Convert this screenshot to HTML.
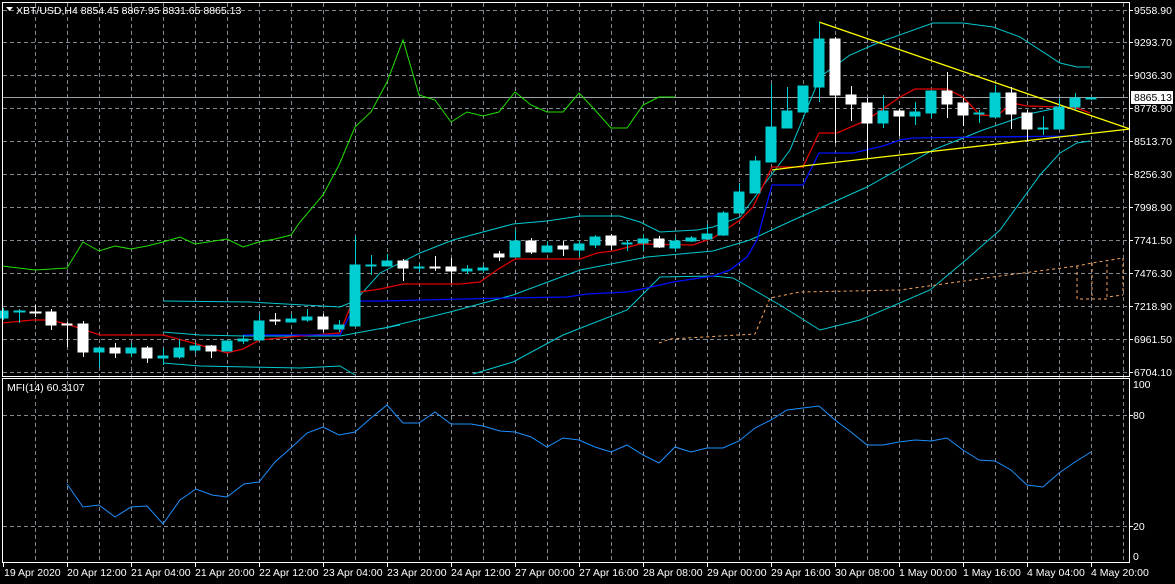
<!DOCTYPE html>
<html><head><meta charset="utf-8"><style>
html,body{margin:0;padding:0;background:#000;}
svg{display:block;font-family:"Liberation Sans",sans-serif;font-size:10.5px;}
</style></head><body>
<svg width="1175" height="584" viewBox="0 0 1175 584" xmlns="http://www.w3.org/2000/svg">
<rect width="1175" height="584" fill="#000"/>
<g stroke="#7f8790" stroke-width="1" stroke-dasharray="4,3" fill="none">
<path d="M35.5 3V562M67.5 3V562M99.5 3V562M131.5 3V562M163.5 3V562M195.5 3V562M227.5 3V562M259.5 3V562M291.5 3V562M323.5 3V562M355.5 3V562M387.5 3V562M419.5 3V562M451.5 3V562M483.5 3V562M515.5 3V562M547.5 3V562M579.5 3V562M611.5 3V562M643.5 3V562M675.5 3V562M707.5 3V562M739.5 3V562M771.5 3V562M803.5 3V562M835.5 3V562M867.5 3V562M899.5 3V562M931.5 3V562M963.5 3V562M995.5 3V562M1027.5 3V562M1059.5 3V562M1091.5 3V562M1123.5 3V562"/>
<path d="M3 10.5H1128M3 42.5H1128M3 75.5H1128M3 108.5H1128M3 141.5H1128M3 174.5H1128M3 207.5H1128M3 240.5H1128M3 273.5H1128M3 306.5H1128M3 339.5H1128M3 372.5H1128M3 415.5H1128M3 526.5H1128"/>
</g>
<!-- price line -->
<line x1="3" y1="97.5" x2="1128" y2="97.5" stroke="#9aa0a8"/>
<!-- bands -->
<g fill="none" stroke="#00c8d0" stroke-width="1">
<polyline points="163,301 250,302 340,307 355,301 380,273 420,253 453,240 513,224 547,221 580,216 620,216 640,222 660,232 697,230 713,227 740,217 760,190 790,150 820,77 850,55 880,42 933,23 963,23 993,27 1020,37 1060,63 1077,67 1090,67"/>
<polyline points="163,332 200,335 243,336 340,336 400,325 380,329 450,312 513,295 580,270 647,257 713,251 750,240 800,217 867,187 933,150 983,130 1033,113 1063,107"/>
<polyline points="163,363 200,366 300,368 340,366 355,375"/>
<polyline points="473,374 513,362 563,335 627,310 660,277 713,276 733,278 780,305 820,330 860,320 930,290 967,259 1000,230 1040,175 1060,153 1077,143 1090,141"/>
</g>
<polyline fill="none" stroke="#22e000" points="2,266 35,270 67,268 83,242 99,251 115,246 131,249 147,246 163,242 180,237 195,244 227,239 243,247 259,242 275,239 291,235 300,222 323,195 339,165 355,127 371,112 387,82 403,40 419,95 435,100 451,122 467,112 483,116 499,112 515,92 531,105 547,112 563,112 579,93 595,110 611,128 627,128 643,105 659,97 675,97"/>
<polyline fill="none" stroke="#e00000" stroke-width="1.3" points="2,323 33,320 50,320 67,324 100,335 163,335 193,343 227,353 243,349 260,340 300,336 340,333 353,300 360,292 380,289 403,284 460,284 480,282 497,270 515,259 580,259 597,253 613,251 640,244 693,245 713,238 740,220 753,207 772,167 803,167 819,133 837,133 867,120 900,97 915,89 947,89 963,97 980,115 997,116 1012,103 1027,106 1060,107 1077,108 1090,113"/>
<polyline fill="none" stroke="#0010ff" stroke-width="1.3" points="243,335 340,335 357,301 380,301 507,298 567,297 587,294 627,292 647,288 673,282 713,276 730,270 747,257 757,240 772,185 803,185 819,153 853,153 883,146 900,140 913,138 987,137 1077,136"/>
<g fill="none" stroke="#f4a460" stroke-dasharray="3,3">
<polyline points="659,343 670,339 755,334 770,298 800,292 900,290 1000,276 1077,266 1092,263 1123,258"/>
<path d="M1077 266V299H1107M1092 263V299M1107 264V297L1123 295M1123 258V295"/>
</g>
<g stroke="#ffff00" stroke-width="1.3" fill="none">
<line x1="819" y1="22" x2="1130" y2="129"/>
<polyline points="772,170 803,166 1130,129"/>
</g>
<!-- candles -->
<g stroke-width="1" shape-rendering="crispEdges">
<g stroke="#00ced1" fill="#00ced1">
<path d="M3.5 308V320M19.5 309V323M99.5 347V367M131.5 343V357M163.5 348V365M179.5 339V359M195.5 343V353M227.5 340V351M243.5 335V344M259.5 314V341M291.5 314V322M307.5 309V322M339.5 320V332M355.5 236V326M371.5 255V275M387.5 254V266M419.5 264V272M467.5 265V274M483.5 265V273M515.5 230V257M547.5 241V252M579.5 241V256M595.5 235V248M627.5 240V251M643.5 235V250M675.5 238V252M691.5 236V242M707.5 224V240M723.5 211V236M739.5 183V213M755.5 156V193M771.5 84V162M787.5 87V128M803.5 86V112M819.5 22V102M883.5 95V128M915.5 102V125M931.5 90V118M979.5 110V123M995.5 85V117M1043.5 116V135M1059.5 98V129M1075.5 93V110M1091.5 97V100"/>
<rect x="-2" y="311" width="10" height="7"/><rect x="14" y="311" width="11" height="1"/>
<rect x="94" y="348" width="10" height="4"/><rect x="126" y="348" width="10" height="5"/>
<rect x="158" y="356" width="10" height="2"/><rect x="174" y="348" width="10" height="9"/>
<rect x="190" y="346" width="10" height="4"/><rect x="222" y="341" width="10" height="10"/>
<rect x="238" y="339" width="10" height="2"/><rect x="254" y="321" width="10" height="19"/>
<rect x="286" y="319" width="10" height="3"/><rect x="302" y="317" width="10" height="3"/>
<rect x="334" y="325" width="10" height="4"/><rect x="350" y="265" width="10" height="61"/>
<rect x="366" y="265" width="10" height="1"/><rect x="382" y="261" width="10" height="5"/>
<rect x="414" y="267" width="10" height="1"/><rect x="462" y="269" width="10" height="2"/>
<rect x="478" y="268" width="10" height="2"/><rect x="510" y="241" width="10" height="16"/>
<rect x="542" y="246" width="10" height="6"/><rect x="574" y="244" width="10" height="6"/>
<rect x="590" y="237" width="10" height="8"/><rect x="622" y="243" width="10" height="1"/>
<rect x="638" y="239" width="10" height="4"/><rect x="670" y="241" width="10" height="7"/>
<rect x="686" y="238" width="10" height="3"/><rect x="702" y="234" width="10" height="5"/>
<rect x="718" y="213" width="10" height="22"/><rect x="734" y="192" width="10" height="21"/>
<rect x="750" y="161" width="10" height="32"/><rect x="766" y="127" width="10" height="35"/>
<rect x="782" y="111" width="10" height="17"/><rect x="798" y="86" width="10" height="26"/>
<rect x="814" y="39" width="10" height="48"/><rect x="878" y="111" width="10" height="12"/>
<rect x="910" y="112" width="10" height="4"/><rect x="926" y="91" width="10" height="22"/>
<rect x="974" y="113" width="10" height="1"/><rect x="990" y="93" width="10" height="24"/>
<rect x="1038" y="128" width="10" height="1"/><rect x="1054" y="107" width="10" height="22"/>
<rect x="1070" y="98" width="10" height="9"/><rect x="1086" y="98" width="10" height="1"/>
</g>
<g stroke="#fff" fill="#fff">
<path d="M35.5 305V317M51.5 309V330M67.5 322V347M83.5 321V357M115.5 343V358M147.5 346V363M211.5 345V358M275.5 313V325M323.5 314V332M403.5 259V281M435.5 256V271M451.5 258V283M499.5 251V261M531.5 238V254M563.5 241V256M611.5 234V250M659.5 236V248M835.5 37V143M851.5 86V121M867.5 98V158M899.5 109V136M947.5 72V118M963.5 98V126M1011.5 87V129M1027.5 110V141"/>
<rect x="30" y="312" width="11" height="1"/><rect x="46" y="312" width="10" height="13"/>
<rect x="62" y="324" width="10" height="1"/><rect x="78" y="324" width="10" height="28"/>
<rect x="110" y="348" width="10" height="5"/><rect x="142" y="348" width="10" height="10"/>
<rect x="206" y="346" width="10" height="5"/><rect x="270" y="320" width="10" height="1"/>
<rect x="318" y="317" width="10" height="12"/><rect x="398" y="261" width="10" height="7"/>
<rect x="430" y="267" width="10" height="1"/><rect x="446" y="267" width="10" height="4"/>
<rect x="494" y="254" width="10" height="3"/><rect x="526" y="241" width="10" height="11"/>
<rect x="558" y="246" width="10" height="3"/><rect x="606" y="236" width="10" height="9"/>
<rect x="654" y="239" width="10" height="8"/><rect x="830" y="39" width="10" height="56"/>
<rect x="846" y="95" width="10" height="9"/><rect x="862" y="103" width="10" height="20"/>
<rect x="894" y="111" width="10" height="5"/><rect x="942" y="91" width="10" height="13"/>
<rect x="958" y="103" width="10" height="12"/><rect x="1006" y="93" width="10" height="21"/>
<rect x="1022" y="113" width="10" height="16"/>
</g>
</g>
<!-- MFI -->
<polyline fill="none" stroke="#1e90ff" points="67,484 83,507 99,505 115,517 131,507 147,506 163,524 180,500 196,489 212,495 227,497 244,484 259,482 275,462 291,448 307,433 323,427 339,435 355,432 371,418 387,405 403,423 419,423 435,412 451,424 471,424 483,426 500,431 515,432 531,437 547,447 563,438 579,440 595,447 611,452 627,445 643,455 659,463 675,447 691,452 707,448 723,448 739,441 755,428 771,420 787,410 803,408 819,406 835,420 851,432 867,445 883,445 899,442 915,440 931,441 947,438 963,450 979,460 995,461 1011,470 1027,485 1043,487 1059,473 1075,462 1091,452"/>
<!-- frames -->
<g fill="none" stroke="#fff" stroke-width="1">
<rect x="2.5" y="2.5" width="1127" height="374"/>
<rect x="2.5" y="378.5" width="1127" height="184"/>
</g>
<!-- axis ticks -->
<g stroke="#fff"><path d="M1129 10.5h4M1129 42.5h4M1129 75.5h4M1129 108.5h4M1129 141.5h4M1129 174.5h4M1129 207.5h4M1129 240.5h4M1129 273.5h4M1129 306.5h4M1129 339.5h4M1129 372.5h4M1129 415.5h4M1129 526.5h4M3.5 563v4M67.5 563v4M131.5 563v4M195.5 563v4M259.5 563v4M323.5 563v4M387.5 563v4M451.5 563v4M515.5 563v4M579.5 563v4M643.5 563v4M707.5 563v4M771.5 563v4M835.5 563v4M899.5 563v4M963.5 563v4M1027.5 563v4M1091.5 563v4"/></g>
<g fill="#fff">
<path d="M6 7h7l-3.5 4z"/>
<text x="16" y="14">XBT/USD,H4  8854.45 8867.95 8831.65 8865.13</text>
<text x="7" y="391">MFI(14) 60.3107</text>
<g>
<text x="1134" y="14">9558.90</text><text x="1134" y="46">9293.70</text><text x="1134" y="79">9036.30</text><text x="1134" y="112">8778.90</text><text x="1134" y="145">8513.70</text><text x="1134" y="178">8256.30</text><text x="1134" y="211">7998.90</text><text x="1134" y="244">7741.50</text><text x="1134" y="277">7476.30</text><text x="1134" y="310">7218.90</text><text x="1134" y="343">6961.50</text><text x="1134" y="376">6704.10</text>
<text x="1133" y="388">100</text><text x="1133" y="419">80</text><text x="1133" y="530">20</text><text x="1133" y="560">0</text>
</g>
<rect x="1131" y="91" width="42" height="13"/>
<text x="1134" y="101" fill="#000">8865.13</text>
<g>
<text x="4" y="576">19 Apr 2020</text><text x="67" y="576">20 Apr 12:00</text><text x="131" y="576">21 Apr 04:00</text><text x="195" y="576">21 Apr 20:00</text><text x="259" y="576">22 Apr 12:00</text><text x="323" y="576">23 Apr 04:00</text><text x="387" y="576">23 Apr 20:00</text><text x="451" y="576">24 Apr 12:00</text><text x="515" y="576">27 Apr 00:00</text><text x="579" y="576">27 Apr 16:00</text><text x="643" y="576">28 Apr 08:00</text><text x="707" y="576">29 Apr 00:00</text><text x="771" y="576">29 Apr 16:00</text><text x="835" y="576">30 Apr 08:00</text><text x="899" y="576">1 May 00:00</text><text x="963" y="576">1 May 16:00</text><text x="1027" y="576">4 May 04:00</text><text x="1091" y="576">4 May 20:00</text>
</g>
</g>
</svg>
</body></html>
